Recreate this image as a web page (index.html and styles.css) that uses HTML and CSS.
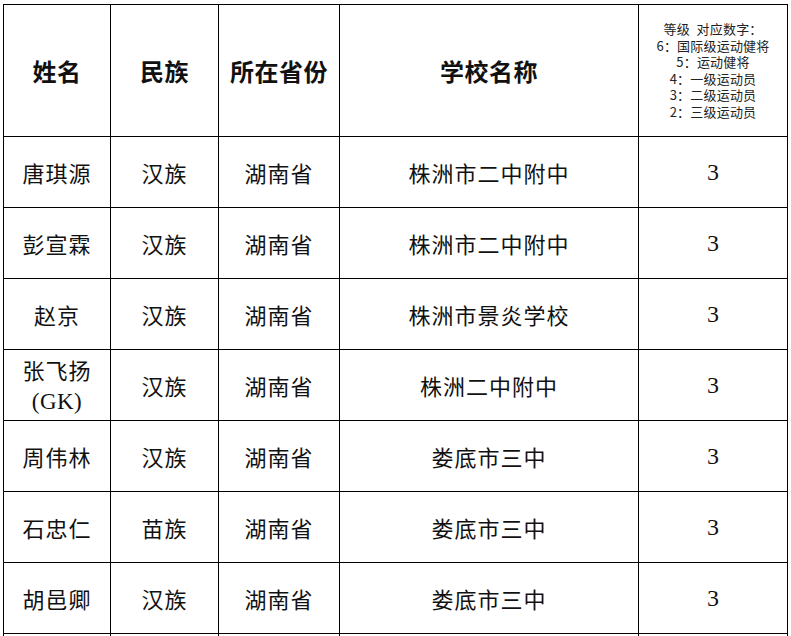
FILE: index.html
```html
<!DOCTYPE html>
<html lang="zh-CN">
<head>
<meta charset="utf-8">
<title>名单</title>
<link rel="stylesheet" href="styles.css">
</head>
<body>
<table class="roster">
  <colgroup>
    <col class="c-name">
    <col class="c-eth">
    <col class="c-prov">
    <col class="c-school">
    <col class="c-level">
  </colgroup>
  <thead>
    <tr class="head-row">
      <th>姓名</th>
      <th>民族</th>
      <th>所在省份</th>
      <th>学校名称</th>
      <th class="legend">
        <div>等级&ensp;对应数字：</div>
        <div>6：国际级运动健将</div>
        <div>5：运动健将</div>
        <div>4：一级运动员</div>
        <div>3：二级运动员</div>
        <div>2：三级运动员</div>
      </th>
    </tr>
  </thead>
  <tbody>
    <tr><td>唐琪源</td><td>汉族</td><td>湖南省</td><td>株洲市二中附中</td><td class="num">3</td></tr>
    <tr><td>彭宣霖</td><td>汉族</td><td>湖南省</td><td>株洲市二中附中</td><td class="num">3</td></tr>
    <tr><td>赵京</td><td>汉族</td><td>湖南省</td><td>株洲市景炎学校</td><td class="num">3</td></tr>
    <tr><td class="two-line">张飞扬<br><span class="latin">(GK)</span></td><td>汉族</td><td>湖南省</td><td>株洲二中附中</td><td class="num">3</td></tr>
    <tr><td>周伟林</td><td>汉族</td><td>湖南省</td><td>娄底市三中</td><td class="num">3</td></tr>
    <tr><td>石忠仁</td><td>苗族</td><td>湖南省</td><td>娄底市三中</td><td class="num">3</td></tr>
    <tr><td>胡邑卿</td><td>汉族</td><td>湖南省</td><td>娄底市三中</td><td class="num">3</td></tr>
    <tr><td>&nbsp;</td><td>&nbsp;</td><td>&nbsp;</td><td>&nbsp;</td><td class="num">&nbsp;</td></tr>
  </tbody>
</table>
</body>
</html>
```

FILE: styles.css
```css
html, body {
  margin: 0;
  padding: 0;
  background: #ffffff;
  overflow: hidden;
}
body {
  padding: 4px 0 0 3px;
  font-family: "Noto Sans CJK SC", "Noto Sans", sans-serif;
  color: #111111;
}
.roster {
  border-collapse: collapse;
  table-layout: fixed;
  width: 784px;
}
.c-name { width: 107px; }
.c-eth { width: 108px; }
.c-prov { width: 121px; }
.c-school { width: 299px; }
.c-level { width: 149px; }

.roster th,
.roster td {
  border: 1.5px solid #000000;
  text-align: center;
  vertical-align: middle;
  padding: 0;
}
.roster th {
  font-size: 24px;
  font-weight: 700;
  letter-spacing: 0.5px;
}
.head-row { height: 132px; }
.roster tbody tr { height: 71px; }
.roster td {
  font-size: 22px;
  font-weight: 400;
  letter-spacing: 1px;
  line-height: 30px;
}
.roster th.legend {
  font-size: 13px;
  font-weight: 400;
  line-height: 16.5px;
  letter-spacing: 0.2px;
  color: #222222;
}
.roster td.num {
  font-family: "Liberation Serif", serif;
  font-size: 24px;
  letter-spacing: 0;
}
.latin {
  font-family: "Liberation Serif", serif;
  letter-spacing: 0.5px;
  font-size: 23px;
}
```
